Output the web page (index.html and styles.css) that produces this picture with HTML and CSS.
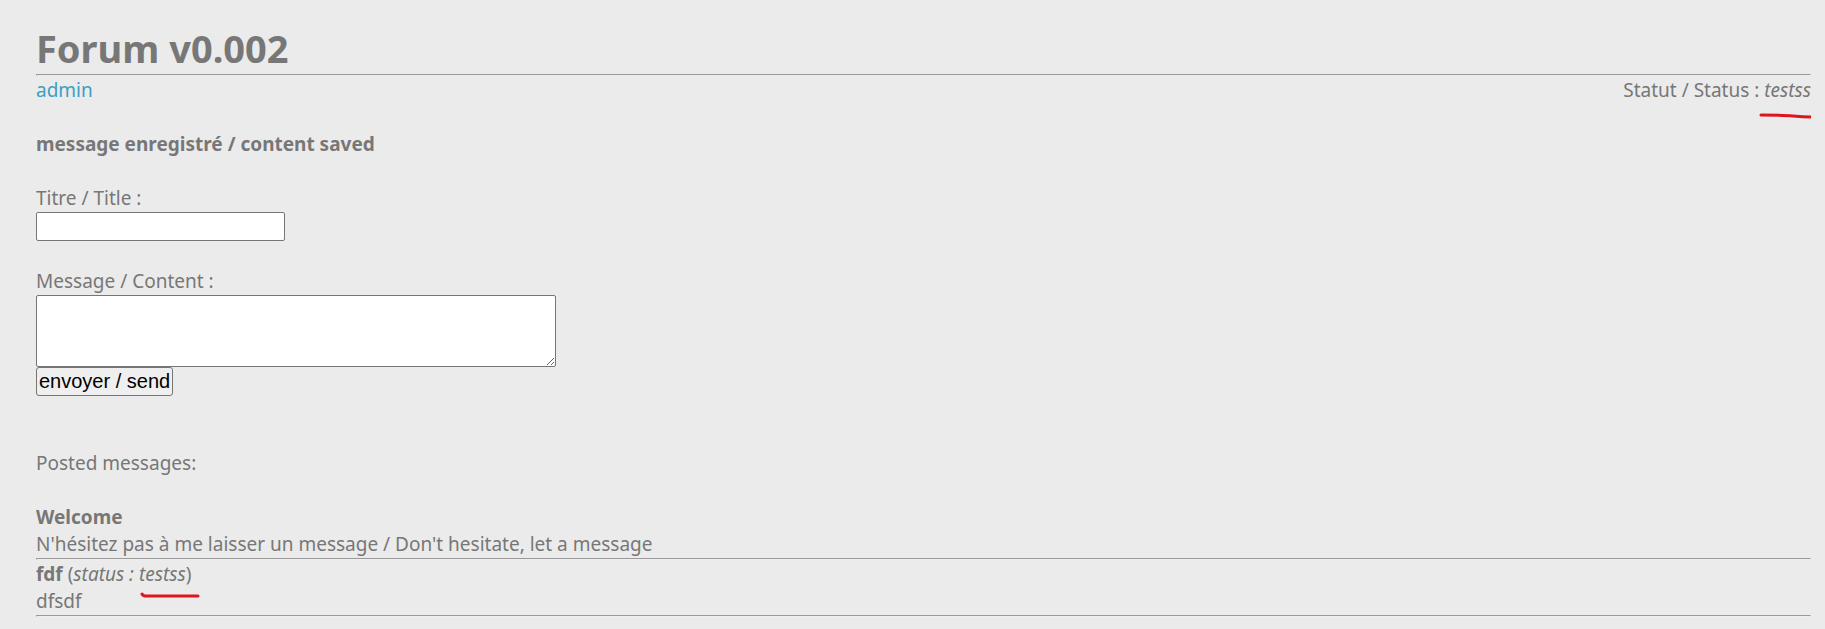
FILE: index.html
```html
<!DOCTYPE html>
<html lang="fr">
  <head>
    <meta charset="UTF-8">
    <title>Forum v0.002</title>
    <link rel="stylesheet" href="styles.css">
  </head>
  <body>

    <h1>Forum v0.002</h1>
    <hr>

    <div class="userbar">
      <a href="#admin">admin</a>
      <div>Statut / Status :
        <i class="marked">testss<svg class="mark" viewBox="0 0 54 6" aria-hidden="true"><path d="M2 2C16 2 24 2 34 3S46 4 52 4"/></svg></i>
      </div>
    </div>

    <p class="notice"><b>message enregistré / content saved</b></p>

    <form class="post-form">
      <div class="field">
        <label for="title">Titre / Title :</label>
        <input type="text" id="title" name="title">
      </div>
      <div class="field">
        <label for="content">Message / Content :</label>
        <textarea id="content" name="content"></textarea>
        <button type="button">envoyer / send</button>
      </div>
    </form>

    <p class="posted">Posted messages:</p>

    <div class="message">
      <b>Welcome</b>
      <p>N'hésitez pas à me laisser un message / Don't hesitate, let a message</p>
    </div>
    <hr>
    <div class="message">
      <b>fdf</b> (<i>status : <span class="marked">testss<svg class="mark mark-wide" viewBox="0 0 60 6" aria-hidden="true"><path d="M2 2Q3 4 6 4H58"/></svg></span></i>)
      <p>dfsdf</p>
    </div>
    <hr>

  </body>
</html>
```
FILE: styles.css
```css
* {
  box-sizing: border-box;
  margin: 0;
  padding: 0;
}

body {
  margin: 22px 14px 0 36px;
  background-color: #ebebeb;
  color: #777;
  font-family: "Malgun Gothic", "Noto Sans", sans-serif;
  font-size: 19px;
  line-height: 27px;
}

h1 {
  font-size: 38px;
  line-height: 52px;
}

hr {
  height: 2px;
  margin-bottom: 1px;
  border: 1px solid;
  border-color: #999 #eee #eee #999;
}

a {
  color: #3c9fc3;
  text-decoration: none;
}

.userbar {
  display: flex;
  justify-content: space-between;
}

.notice {
  margin: 27px 0;
}

.field {
  display: flex;
  flex-direction: column;
  align-items: flex-start;
  margin-bottom: 27px;
}

input,
textarea,
button {
  font-family: "Liberation Sans", Arial, sans-serif;
  font-size: 20px;
  border: 1px solid #767676;
  border-radius: 2px;
}

input {
  width: 249px;
  height: 29px;
  padding: 2px;
}

textarea {
  width: 520px;
  height: 72px;
  padding: 2px;
}

button {
  height: 29px;
  padding: 0 2px;
  border-radius: 3px;
  background-color: #efefef;
  color: #000;
}

.posted {
  margin: 54px 0 27px;
}

/* hand-drawn red line under the user status */
.marked {
  position: relative;
}

.mark {
  position: absolute;
  right: -2px;
  top: 36px;
  width: 54px;
  height: 6px;
  fill: none;
  stroke: #e0141c;
  stroke-width: 3px;
  stroke-linecap: round;
}

.mark-wide {
  right: -14px;
  top: 31px;
  width: 60px;
}
```
